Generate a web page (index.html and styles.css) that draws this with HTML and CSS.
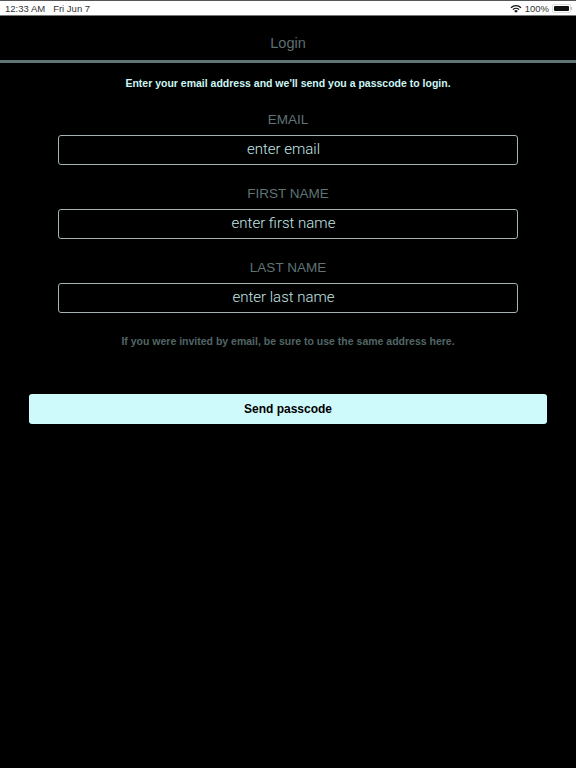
FILE: index.html
```html
<!DOCTYPE html>
<html lang="en">
<head>
    <meta charset="UTF-8">
    <meta name="viewport" content="width=device-width, initial-scale=1.0">
    <title>Login</title>
    <link rel="stylesheet" href="styles.css">
</head>
<body>
    <div class="status-bar">
        <div class="status-left">
            <span>12:33 AM</span>
            <span>Fri Jun 7</span>
        </div>
        <div class="status-right">
            <svg class="wifi" width="12" height="9" viewBox="0 0 12 9">
                <path d="M6 8.8 L4.2 6.9 A2.6 2.6 0 0 1 7.8 6.9 Z" fill="#111"/>
                <path d="M2.9 5.6 A4.5 4.5 0 0 1 9.1 5.6" fill="none" stroke="#111" stroke-width="1.3"/>
                <path d="M1 3.7 A7.2 7.2 0 0 1 11 3.7" fill="none" stroke="#111" stroke-width="1.3"/>
            </svg>
            <span>100%</span>
            <div class="battery"><div class="battery-fill"></div></div>
            <div class="battery-cap"></div>
        </div>
    </div>
    <div class="title-bar">Login</div>
    <div class="content">
        <p class="intro">Enter your email address and we'll send you a passcode to login.</p>
        <form class="login-form">
            <div class="field">
                <label class="field-label">EMAIL</label>
                <div class="field-input">enter email</div>
            </div>
            <div class="field">
                <label class="field-label">FIRST NAME</label>
                <div class="field-input">enter first name</div>
            </div>
            <div class="field">
                <label class="field-label">LAST NAME</label>
                <div class="field-input">enter last name</div>
            </div>
        </form>
        <p class="hint">If you were invited by email, be sure to use the same address here.</p>
        <button class="send-btn" type="button">Send passcode</button>
    </div>
</body>
</html>
```

FILE: styles.css
```css
body {
    font-family: "Liberation Sans", Arial, sans-serif;
    background-color: #000;
    margin: 0;
    padding: 0;
}
.status-bar {
    height: 14px;
    margin-top: 1px;
    padding: 0 4px 0 5px;
    background-color: #fff;
    border-bottom: 1px solid #777;
    display: flex;
    align-items: center;
    justify-content: space-between;
    font-size: 9.5px;
    color: #333;
    box-shadow: 0 -1px 0 #555;
}
.status-left {
    display: flex;
    gap: 8px;
}
.status-right {
    display: flex;
    align-items: center;
    gap: 3px;
}
.battery {
    box-sizing: border-box;
    width: 19px;
    height: 9px;
    padding: 1px;
    border: 1px solid #ddd;
    border-radius: 2px;
}
.battery-fill {
    height: 100%;
    background-color: #111;
    border-radius: 1px;
}
.battery-cap {
    width: 1px;
    height: 3px;
    margin-left: -3px;
    background-color: #bbb;
}
.title-bar {
    height: 44px;
    line-height: 54px;
    border-bottom: 3px solid #5f7475;
    text-align: center;
    font-size: 14.5px;
    color: #5d6f70;
}
.content {
    display: flex;
    flex-direction: column;
    align-items: center;
}
.intro {
    margin: 14px 0 0;
    font-size: 10.5px;
    line-height: 13px;
    font-weight: bold;
    color: #cdf6f6;
}
.login-form {
    width: 460px;
    margin-top: 22px;
    display: flex;
    flex-direction: column;
    gap: 21px;
}
.field {
    display: flex;
    flex-direction: column;
    gap: 8px;
}
.field-label {
    text-align: center;
    font-size: 13.5px;
    line-height: 15px;
    color: #5f7475;
}
.field-input {
    box-sizing: border-box;
    height: 30px;
    line-height: 26px;
    border: 1px solid #a4b4b4;
    border-radius: 3px;
    padding-right: 9px;
    text-align: center;
    font-family: Roboto, "Liberation Sans", sans-serif;
    font-weight: 300;
    font-size: 15px;
    color: #c4e6e6;
}
.hint {
    margin: 22px 0 0;
    font-size: 10.5px;
    line-height: 13px;
    font-weight: bold;
    color: #526667;
}
.send-btn {
    width: 518px;
    height: 30px;
    margin-top: 45.5px;
    padding: 0;
    border: 0;
    border-radius: 3px;
    background-color: #cffafc;
    font-family: "Liberation Sans", Arial, sans-serif;
    font-size: 12px;
    font-weight: bold;
    color: #000;
}
```
